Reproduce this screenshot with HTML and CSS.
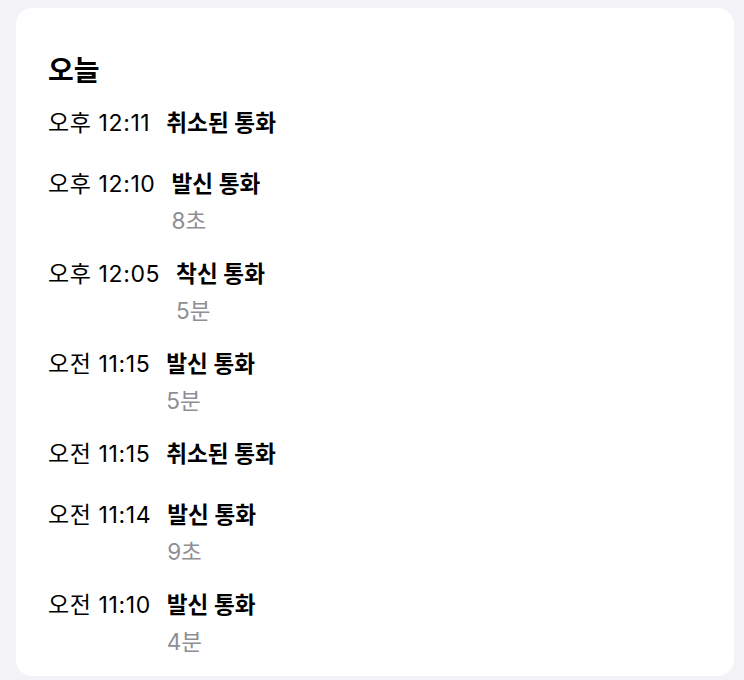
FILE: index.html
```html
<!DOCTYPE html>
<html lang="ko">
<head>
<meta charset="utf-8">
<link rel="stylesheet" href="styles.css">
</head>
<body>
<div class="card">
  <h2 class="title">오늘</h2>
  <ul class="list">
    <li class="row"><span class="time">오후 12:11</span><div class="info"><span class="label">취소된 통화</span></div></li>
    <li class="row"><span class="time">오후 12:10</span><div class="info"><span class="label">발신 통화</span><span class="dur">8초</span></div></li>
    <li class="row"><span class="time">오후 12:05</span><div class="info"><span class="label">착신 통화</span><span class="dur">5분</span></div></li>
    <li class="row"><span class="time">오전 11:15</span><div class="info"><span class="label">발신 통화</span><span class="dur">5분</span></div></li>
    <li class="row"><span class="time">오전 11:15</span><div class="info"><span class="label">취소된 통화</span></div></li>
    <li class="row"><span class="time">오전 11:14</span><div class="info"><span class="label">발신 통화</span><span class="dur">9초</span></div></li>
    <li class="row"><span class="time">오전 11:10</span><div class="info"><span class="label">발신 통화</span><span class="dur">4분</span></div></li>
  </ul>
</div>
</body>
</html>
```
FILE: styles.css
```css
html, body {
  margin: 0;
  padding: 0;
  background: #f2f2f7;
}
body {
  padding: 8px 10px 4px 16px;
  font-family: Inter, "Noto Sans CJK KR", sans-serif;
  color: #000;
}
.card {
  background: #fff;
  border-radius: 16px;
  height: 668px;
  box-sizing: border-box;
  padding: 46px 32px 0 32px;
}
.title {
  margin: 0 0 21px;
  font-size: 28px;
  font-weight: 700;
  line-height: 34px;
}
.list {
  list-style: none;
  margin: 0;
  padding: 0;
}
.row {
  display: flex;
  align-items: flex-start;
  min-height: 61px;
}
.time {
  font-size: 23px;
  line-height: 28px;
  letter-spacing: 0.6px;
}
.info {
  display: flex;
  flex-direction: column;
  margin-left: 16px;
}
.label {
  font-size: 22.6px;
  font-weight: 600;
  line-height: 28px;
}
.dur {
  font-size: 22.5px;
  line-height: 24px;
  color: #8e8e93;
  margin-top: 11px;
  margin-bottom: 27px;
}
```
